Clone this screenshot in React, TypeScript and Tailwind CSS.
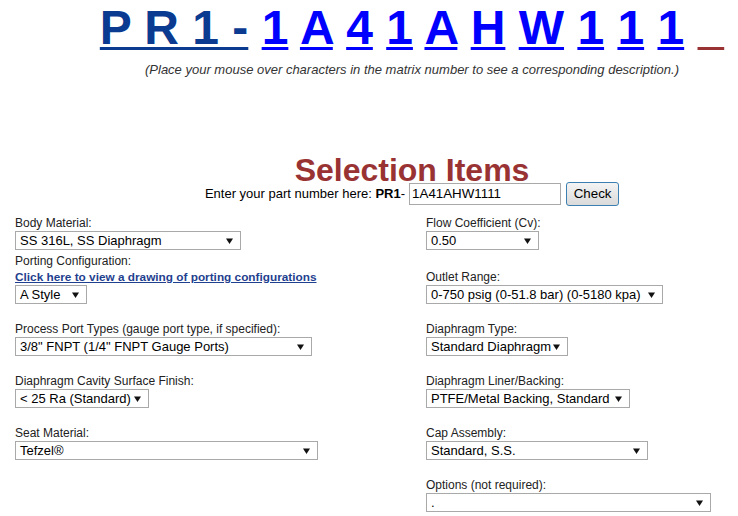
import React from 'react';

const Arrow: React.FC = () => (
    <svg width="7" height="6" viewBox="0 0 7 6" className="shrink-0">
        <path d="M0 0.5 H7 L3.5 6 Z" fill="#111" />
    </svg>
);

const Select: React.FC<{ value: string; w: string }> = ({ value, w }) => (
    <div className={`flex h-[19px] items-center justify-between border border-[#a9a9a9] bg-white pl-[4px] pr-[7px] text-[13px] leading-none text-black ${w}`}>
        <span className="whitespace-nowrap">{value}</span>
        <Arrow />
    </div>
);

const Field: React.FC<{ label: string; value: string; w: string; className?: string }> = ({ label, value, w, className = '' }) => (
    <div className={className}>
        <div className="h-[16px] text-[12px] leading-[16px] text-[#222]">{label}</div>
        <Select value={value} w={w} />
    </div>
);

const blueChars = ['1', 'A', '4', '1', 'A', 'H', 'W', '1', '1', '1'];

const App: React.FC = () => {
    return (
        <div className="h-[516px] w-full overflow-hidden bg-white font-['Liberation_Sans',Arial,sans-serif]">
            <div className="w-[824px]">
                {/* Matrix number */}
                <div className="h-[56px] text-center text-[48px] font-bold leading-[56px]">
                    <a className="text-[#0a3b91] underline decoration-[3px] underline-offset-[3px]">P R 1 -</a>
                    {blueChars.map((c, i) => (
                        <React.Fragment key={i}>
                            {' '}
                            <a className="text-[#0000ff] underline decoration-[3px] underline-offset-[3px]">{c}</a>
                        </React.Fragment>
                    ))}
                    {' '}
                    <a className="text-[#993333] underline decoration-[3px] underline-offset-[3px]">{'\u00a0\u00a0'}</a>
                </div>
                <p className="mt-[6px] text-center text-[13px] italic leading-[15px] text-[#333]">
                    (Place your mouse over characters in the matrix number to see a corresponding description.)
                </p>

                {/* Selection header */}
                <h1 className="mt-[81px] h-[25px] text-center text-[32px] font-bold leading-[25px] text-[#993333]">Selection Items</h1>
                <div className="-mt-px flex h-[24px] items-center justify-center text-[13px] text-black">
                    <span>Enter your part number here:&nbsp;</span>
                    <b>PR1</b>
                    <span>-</span>
                    <div className="ml-[4px] flex h-[22px] w-[152px] items-center border border-[#a9a9a9] bg-white pl-[2px] text-[13.33px]">1A41AHW1111</div>
                    <button className="ml-[5px] h-[24px] w-[53px] rounded-[3px] border border-[#3c7fb1] bg-gradient-to-b from-[#f4f4f4] to-[#dadada] text-[13.33px] text-black">Check</button>
                </div>

                {/* Form */}
                <div className="mt-[9px] grid grid-cols-2">
                    <div className="pl-[15px]">
                        <Field label="Body Material:" value="SS 316L, SS Diaphragm" w="w-[226px]" />
                        <div className="mt-[4px] h-[15px] text-[12px] leading-[15px] text-[#222]">Porting Configuration:</div>
                        <a className="block h-[16px] text-[11.8px] font-bold leading-[16px] text-[#1f3f8f] underline">Click here to view a drawing of porting configurations</a>
                        <Select value="A Style" w="w-[72px]" />
                        <Field className="mt-[17px]" label="Process Port Types (gauge port type, if specified):" value={'3/8" FNPT (1/4" FNPT Gauge Ports)'} w="w-[297px]" />
                        <Field className="mt-[17px]" label="Diaphragm Cavity Surface Finish:" value="< 25 Ra (Standard)" w="w-[134px]" />
                        <Field className="mt-[17px]" label="Seat Material:" value="Tefzel®" w="w-[303px]" />
                    </div>
                    <div className="pl-[14px]">
                        <Field label="Flow Coefficient (Cv):" value="0.50" w="w-[113px]" />
                        <Field className="mt-[19px]" label="Outlet Range:" value="0-750 psig (0-51.8 bar) (0-5180 kpa)" w="w-[237px]" />
                        <Field className="mt-[17px]" label="Diaphragm Type:" value="Standard Diaphragm" w="w-[142px]" />
                        <Field className="mt-[17px]" label="Diaphragm Liner/Backing:" value="PTFE/Metal Backing, Standard" w="w-[204px]" />
                        <Field className="mt-[17px]" label="Cap Assembly:" value="Standard, S.S." w="w-[222px]" />
                        <Field className="mt-[17px]" label="Options (not required):" value="." w="w-[285px]" />
                    </div>
                </div>
            </div>
        </div>
    );
};

export default App;
